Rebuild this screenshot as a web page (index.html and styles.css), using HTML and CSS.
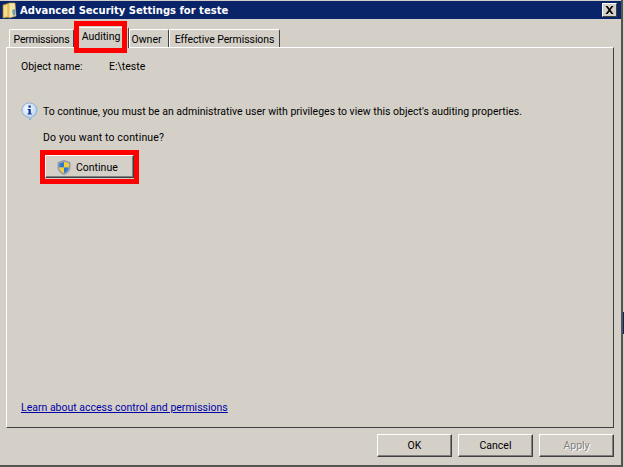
FILE: index.html
```html
<!DOCTYPE html>
<html>
  <head>
    <title>Advanced Security Settings for teste</title>
    <link rel="stylesheet" href="styles.css">
  </head>
  <body>
    <div class="window">
      <div class="titlebar">
        <svg class="folder-icon" width="15" height="17" viewBox="0 0 15 17">
          <path d="M1 3 L8 1 L8 15 L1 16 Z" fill="#e8c766" stroke="#b8923a" stroke-width="0.6"/>
          <path d="M7 1 L13 1 L14 14 L7 16 Z" fill="#f7e7a6" stroke="#c9a64e" stroke-width="0.6"/>
          <path d="M10 8 L13 7 L13 13 L11 14 Z" fill="#6f9fd0"/>
          <path d="M2 4 L5 3 L5 14 L2 15 Z" fill="#f5dc8c"/>
        </svg>
        <span class="title-text">Advanced Security Settings for teste</span>
        <button class="close-btn">
          <svg width="9" height="8" viewBox="0 0 9 8">
            <path d="M0.5 0 L2.5 0 L4.5 2.5 L6.5 0 L8.5 0 L5.5 4 L8.5 8 L6.5 8 L4.5 5.5 L2.5 8 L0.5 8 L3.5 4 Z" fill="#000"/>
          </svg>
        </button>
      </div>

      <div class="tabs">
        <div class="tab tab-permissions">Permissions</div>
        <div class="tab tab-auditing active">Auditing</div>
        <div class="tab tab-owner">Owner</div>
        <div class="tab tab-effective">Effective Permissions</div>
      </div>

      <div class="panel">
        <div class="object-row">
          <span class="object-label">Object name:</span>
          <span>E:\teste</span>
        </div>

        <div class="info-row">
          <svg class="info-icon" width="17" height="19" viewBox="0 0 17 19">
            <defs>
              <radialGradient id="bubble" cx="40%" cy="35%" r="70%">
                <stop offset="0%" stop-color="#ffffff"/>
                <stop offset="100%" stop-color="#a9c8ec"/>
              </radialGradient>
            </defs>
            <path d="M8.5 1 C12.8 1 16 4 16 8 C16 11.6 13.6 14 11 14.6 L9 18 L8 15 C4 15 1 12 1 8 C1 4 4.2 1 8.5 1 Z" fill="url(#bubble)" stroke="#7da2cf" stroke-width="0.8"/>
            <rect x="7.4" y="3.5" width="2.4" height="2.2" fill="#14399a"/>
            <path d="M6.5 7 L9.8 7 L9.8 11.5 L10.8 11.5 L10.8 12.6 L6.5 12.6 L6.5 11.5 L7.5 11.5 L7.5 8.1 L6.5 8.1 Z" fill="#14399a"/>
          </svg>
          <span>To continue, you must be an administrative user with privileges to view this object's auditing properties.</span>
        </div>

        <p class="question">Do you want to continue?</p>

        <button class="btn continue-btn">
          <svg class="shield-icon" width="14" height="15" viewBox="0 0 14 15">
            <path d="M7 0.5 L13 2.5 L13 7 C13 11 10 13.5 7 14.5 C4 13.5 1 11 1 7 L1 2.5 Z" fill="#a9adb4" stroke="#6f747c" stroke-width="0.6"/>
            <path d="M7 2 L7 7.5 L2.3 7.5 L2.3 3.4 Z" fill="#2e78d2"/>
            <path d="M7 2 L11.7 3.4 L11.7 7.5 L7 7.5 Z" fill="#f7cf2e"/>
            <path d="M2.4 7.5 L7 7.5 L7 13 C4.6 12.2 2.6 10.2 2.4 7.5 Z" fill="#f7cf2e"/>
            <path d="M7 7.5 L11.6 7.5 C11.4 10.2 9.4 12.2 7 13 Z" fill="#2e78d2"/>
          </svg>
          Continue
        </button>

        <a class="learn-link" href="#">Learn about access control and permissions</a>
      </div>

      <div class="footer">
        <button class="btn footer-btn">OK</button>
        <button class="btn footer-btn">Cancel</button>
        <button class="btn footer-btn disabled">Apply</button>
      </div>

      <div class="highlight highlight-tab"></div>
      <div class="highlight highlight-continue"></div>
    </div>
    <div class="edge-sliver"></div>
  </body>
</html>
```

FILE: styles.css
```css
* {
  box-sizing: border-box;
}

html,
body {
  margin: 0;
  height: 100%;
  overflow: hidden;
  background-color: #d4d0c8;
}

body {
  font-family: Roboto, "Liberation Sans", Arial, sans-serif;
  font-size: 10.5px;
  color: #000;
}

.window {
  position: relative;
  width: 623px;
  height: 467px;
  padding-top: 1px;
  display: flex;
  flex-direction: column;
  background-color: #d4d0c8;
  border-right: 2px solid #55534f;
  border-bottom: 2px solid #55534f;
}

.titlebar {
  height: 18px;
  display: flex;
  align-items: center;
  background-color: #0a246a;
  color: #fff;
  flex: none;
}

.folder-icon {
  margin-left: 2px;
  flex: none;
}

.title-text {
  margin-left: 3px;
  font-family: "DejaVu Sans", sans-serif;
  font-size: 10px;
  font-weight: bold;
}

.close-btn {
  margin-left: auto;
  margin-right: 4px;
  width: 15px;
  height: 14px;
  padding: 0;
  display: flex;
  align-items: center;
  justify-content: center;
  background-color: #d4d0c8;
  border: 1px solid;
  border-color: #fff #404040 #404040 #fff;
}

.tabs {
  height: 28px;
  padding-left: 9px;
  display: flex;
  align-items: flex-end;
  flex: none;
}

.tab {
  height: 18px;
  padding-top: 3px;
  text-align: center;
  white-space: nowrap;
  background-color: #d4d0c8;
  border: 1px solid;
  border-color: #fff #404040 #d4d0c8 #fff;
  border-bottom: none;
  border-radius: 2px 2px 0 0;
}

.tab-permissions {
  width: 65px;
  letter-spacing: -0.2px;
}

.tab-auditing {
  width: 55px;
  height: 21px;
  margin-bottom: -1px;
  padding: 2px 1px 0 0;
  position: relative;
}

.tab-owner {
  width: 40px;
  padding-right: 5px;
}

.tab-effective {
  width: 111px;
  letter-spacing: -0.08px;
}

.panel {
  height: 381px;
  margin-left: 6px;
  margin-right: 7px;
  padding: 12px 14px 13px;
  display: flex;
  flex-direction: column;
  align-items: flex-start;
  border: 1px solid;
  border-color: #fff #404040 #404040 #fff;
  flex: none;
}

.object-row {
  display: flex;
  height: 14px;
  line-height: 14px;
}

.object-label {
  width: 88px;
}

.info-row {
  margin-top: 28px;
  display: flex;
  align-items: center;
  height: 19px;
}

.info-icon {
  flex: none;
  margin-right: 5px;
}

.question {
  margin: 10px 0 0 22px;
  line-height: 14px;
  letter-spacing: 0.15px;
}

.btn {
  font-family: inherit;
  font-size: 10.5px;
  color: #000;
  background-color: #d4d0c8;
  border: 1px solid;
  border-color: #fff #404040 #404040 #fff;
  box-shadow: inset -1px -1px 0 #808080;
}

.continue-btn {
  width: 89px;
  height: 24px;
  margin: 9px 0 0 24px;
  padding: 2px 0 0 11px;
  display: flex;
  align-items: center;
  gap: 5px;
  border-top: 2px solid #fff;
}

.learn-link {
  margin-top: auto;
  color: #0000a8;
}

.footer {
  padding: 6px 7px 0 0;
  display: flex;
  justify-content: flex-end;
  gap: 6px;
}

.footer-btn {
  width: 75px;
  height: 23px;
  padding: 0;
}

.footer-btn.disabled {
  color: #808080;
  text-shadow: 1px 1px 0 #fff;
}

.highlight {
  position: absolute;
  border: 5px solid #f00;
  pointer-events: none;
}

.highlight-tab {
  left: 74px;
  top: 21px;
  width: 53px;
  height: 32px;
}

.highlight-continue {
  left: 40px;
  top: 150px;
  width: 99px;
  height: 34px;
}

.edge-sliver {
  position: absolute;
  left: 623px;
  top: 312px;
  width: 1px;
  height: 22px;
  background-color: #0a246a;
}
```
